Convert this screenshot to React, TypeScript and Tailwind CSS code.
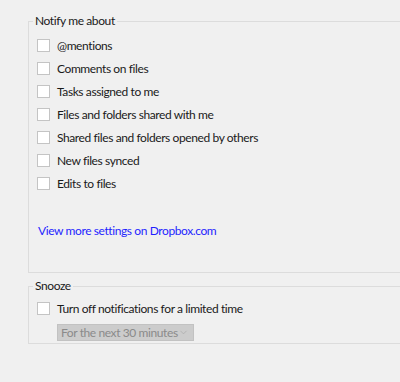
import { ChevronDown } from 'lucide-react';

const options = [
    '@mentions',
    'Comments on files',
    'Tasks assigned to me',
    'Files and folders shared with me',
    'Shared files and folders opened by others',
    'New files synced',
    'Edits to files',
];

function Check({ label }: { label: string }) {
    return (
        <label className="flex items-center h-[23px] gap-[7px]">
            <span className="w-[13px] h-[13px] bg-white border border-[#c4c4c4] shrink-0" />
            <span>{label}</span>
        </label>
    );
}

export default function App() {
    return (
        <div
            className="w-[400px] h-[382px] bg-[#f0f0f0] overflow-hidden pl-[28px] pt-[14px] text-[12px] tracking-[-0.4px] text-[#1a1a1a]"
            style={{ fontFamily: 'Lato, "Noto Sans", sans-serif' }}
        >
            <fieldset className="w-[390px] h-[259px] border border-[#dcdcdc]">
                <legend className="ml-[4px] px-[2px] leading-[14px]">Notify me about</legend>
                <div className="flex flex-col pt-[6px] pl-[8px]">
                    {options.map((o) => (
                        <Check key={o} label={o} />
                    ))}
                </div>
                <a className="block mt-[28px] ml-[9px] text-[#1f1fff] leading-[16px]">
                    View more settings on Dropbox.com
                </a>
            </fieldset>

            <fieldset className="w-[390px] h-[65px] mt-[6px] border border-[#dcdcdc]">
                <legend className="ml-[4px] px-[2px] leading-[14px]">Snooze</legend>
                <div className="pt-[4px] pl-[8px]">
                    <Check label="Turn off notifications for a limited time" />
                </div>
                <div className="ml-[28px] mt-[4px] w-[137px] h-[17px] bg-[#cccccc] border border-[#c2c2c2] flex items-center justify-between pl-[3px] pr-[4px] text-[#8a8a8a] whitespace-nowrap">
                    <span className="leading-[15px]">For the next 30 minutes</span>
                    <ChevronDown size={11} strokeWidth={1.2} className="text-[#a0a0a0]" />
                </div>
            </fieldset>
        </div>
    );
}
